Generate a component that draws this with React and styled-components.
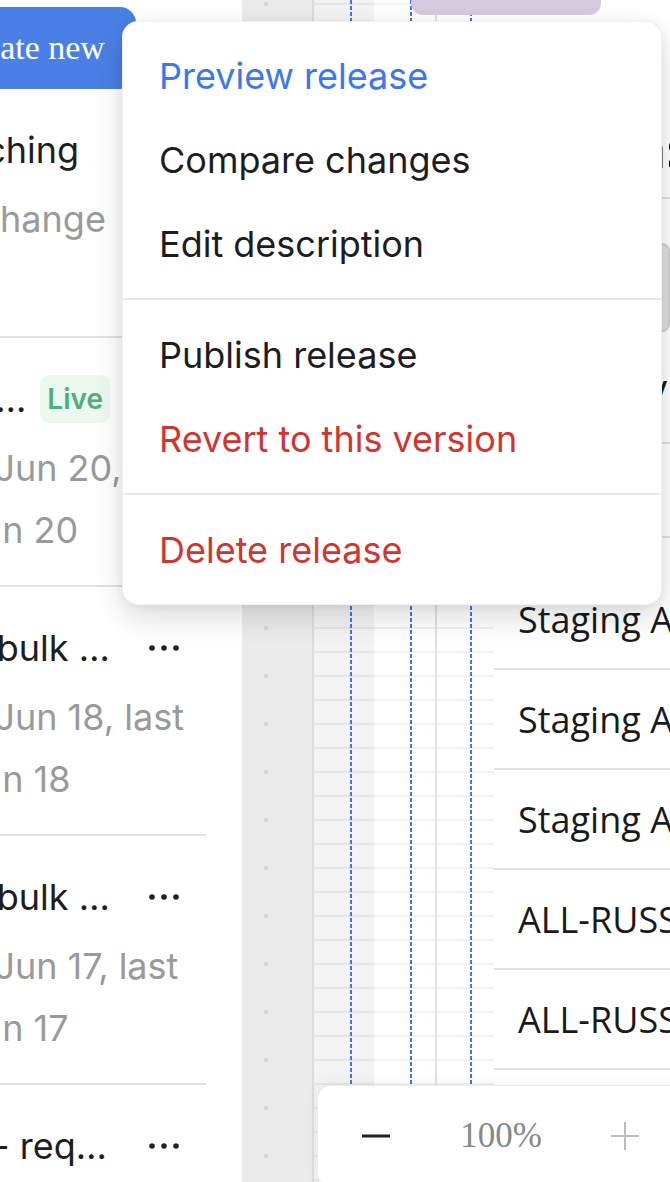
import React from "react";
import styled, { createGlobalStyle } from "styled-components";

const GlobalStyle = createGlobalStyle`
  html, body {
    margin: 0;
    padding: 0;
  }
  body {
    background: #fff;
    font-family: Inter, "Noto Sans", sans-serif;
    overflow: hidden;
  }
`;

const releases = [
  { title: "Tag matching", meta: "Staged change" },
  {
    title: "Regional staging import",
    meta: "Created Jun 20, last saved Jun 20",
    live: true,
  },
  { title: "Improve bulk editing", meta: "Created Jun 18, last saved Jun 18" },
  { title: "Improve bulk import", meta: "Created Jun 17, last saved Jun 17" },
  { title: "Release - requests", meta: "Created Jun 16, last saved Jun 16" },
];

const tableRows = [
  "Staging Area 1",
  "Staging Area 2",
  "Staging Area 3",
  "ALL-RUSSIA Expo",
  "ALL-RUSSIA Forum",
];

const menuTones = {
  accent: "#3e76ee",
  danger: "#d0352f",
  normal: "#1d1d1f",
};

function App() {
  return (
    <Screen>
      <GlobalStyle />
      <Sidebar>
        <CreateButton>Create new</CreateButton>
        {releases.map((r) => (
          <Release key={r.title}>
            <TitleLine>
              <Title>{r.title}</Title>
              {r.live && <Badge>Live</Badge>}
              <MoreButton aria-label="More">
                <svg width="36" height="12" viewBox="0 0 36 12">
                  <circle cx="6" cy="6" r="2.8" fill="#222" />
                  <circle cx="18" cy="6" r="2.8" fill="#222" />
                  <circle cx="30" cy="6" r="2.8" fill="#222" />
                </svg>
              </MoreButton>
            </TitleLine>
            <Meta>{r.meta}</Meta>
          </Release>
        ))}
      </Sidebar>

      <Canvas>
        <Frame>
          <SelectedBlock />
          <GridColumn $width={60} $bg="#f4f3f4" $line="#e6e5e6" $guide={36} />
          <GridColumn $width={61} $bg="#ffffff" $line="#f1f1f1" $guide={36} $divider />
          <GridColumn $width={57} $bg="#ffffff" $line="#f1f1f1" $guide={33} />
          <Table>
            <Intro>
              <Heading>Release schedule</Heading>
              <SearchBox>Search</SearchBox>
              <Caption>Country by region</Caption>
              <HeadRow>Title</HeadRow>
            </Intro>
            {tableRows.map((t) => (
              <DataRow key={t}>{t}</DataRow>
            ))}
          </Table>
        </Frame>
      </Canvas>

      <Menu>
        <MenuItem $tone="accent">Preview release</MenuItem>
        <MenuItem>Compare changes</MenuItem>
        <MenuItem>Edit description</MenuItem>
        <MenuDivider />
        <MenuItem>Publish release</MenuItem>
        <MenuItem $tone="danger">Revert to this version</MenuItem>
        <MenuDivider />
        <MenuItem $tone="danger">Delete release</MenuItem>
      </Menu>

      <ZoomBar>
        <ZoomCell $width={116}>
          <svg width="28" height="4" viewBox="0 0 28 4">
            <rect x="0" y="0.5" width="28" height="3" fill="#222" />
          </svg>
        </ZoomCell>
        <ZoomCell $width={134}>
          <ZoomValue>100%</ZoomValue>
        </ZoomCell>
        <ZoomCell $width={114}>
          <svg width="28" height="28" viewBox="0 0 28 28">
            <rect x="0" y="13" width="28" height="2" fill="#bdbdbd" />
            <rect x="13" y="0" width="2" height="28" fill="#bdbdbd" />
          </svg>
        </ZoomCell>
      </ZoomBar>
    </Screen>
  );
}

const Screen = styled.div`
  position: relative;
  display: flex;
  width: 670px;
  height: 1182px;
  overflow: hidden;
`;

const Sidebar = styled.aside`
  flex: none;
  width: 420px;
  margin-left: -178px;
  padding: 7px 36px 0 27px;
  box-sizing: border-box;
  background: #fff;
`;

const CreateButton = styled.button`
  display: block;
  width: 216px;
  height: 82px;
  margin-left: 71px;
  padding: 0;
  border: none;
  border-radius: 16px;
  background: #4a7fe6;
  color: #fff;
  font-family: "Liberation Serif", "Times New Roman", serif;
  font-size: 34px;
`;

const Release = styled.div`
  min-height: 249px;
  box-sizing: border-box;
  padding: 37px 0 24px;
  border-bottom: 2px solid #e2e2e2;
`;

const TitleLine = styled.div`
  display: flex;
  align-items: center;
  gap: 8px;
  height: 48px;
`;

const Title = styled.div`
  flex: 1;
  min-width: 0;
  white-space: nowrap;
  overflow: hidden;
  text-overflow: ellipsis;
  font-size: 36px;
  line-height: 48px;
  color: #1e1e1e;
`;

const Badge = styled.span`
  flex: none;
  height: 48px;
  margin: 0 4px;
  padding: 0 7px;
  border-radius: 9px;
  background: #edf8f1;
  color: #4cb07b;
  font-size: 28px;
  font-weight: 600;
  line-height: 48px;
`;

const MoreButton = styled.button`
  flex: none;
  display: flex;
  align-items: center;
  justify-content: center;
  width: 84px;
  height: 48px;
  padding: 0;
  border: none;
  background: none;
`;

const Meta = styled.div`
  margin-top: 14px;
  font-size: 36px;
  line-height: 62px;
  color: #9a9a9a;
`;

const Canvas = styled.main`
  flex: 1;
  display: flex;
  min-width: 0;
  padding-left: 70px;
  background-color: #ebebeb;
  background-image: radial-gradient(circle, #d7d7d7 2px, transparent 2.6px);
  background-size: 48px 48px;
  background-position: 0 -20px;
`;

const Frame = styled.section`
  position: relative;
  flex: 1;
  display: flex;
  min-width: 0;
  border-left: 2px solid #dddddd;
  background: #fff;
`;

const SelectedBlock = styled.div`
  position: absolute;
  left: 97px;
  top: -20px;
  width: 190px;
  height: 35px;
  border-radius: 12px;
  background: #d4cbdf;
`;

const GridColumn = styled.div`
  flex: none;
  width: ${(p) => p.$width}px;
  background-color: ${(p) => p.$bg};
  background-image: linear-gradient(to bottom, #3f74f2 0 4px, transparent 4px),
    linear-gradient(to bottom, ${(p) => p.$line} 0 2px, transparent 2px);
  background-size: 2px 6px, 100% 24px;
  background-repeat: repeat-y, repeat-y;
  background-position: ${(p) => p.$guide}px 0, 0 3px;
  border-right: ${(p) => (p.$divider ? "2px solid #e1e1e1" : "none")};
`;

const Table = styled.div`
  flex: 1;
  min-width: 0;
  overflow: hidden;
  font-family: "Open Sans", "Noto Sans", sans-serif;
  color: #1a1a1a;
`;

const Intro = styled.div`
  height: 570px;
  box-sizing: border-box;
  padding: 112px 0 0 24px;
  white-space: nowrap;
`;

const Heading = styled.h2`
  margin: 0;
  height: 85px;
  font-size: 54px;
  font-weight: 700;
  line-height: 70px;
  border-bottom: 2px solid #e1e1e1;
`;

const SearchBox = styled.div`
  margin-top: 44px;
  height: 89px;
  box-sizing: border-box;
  padding-left: 20px;
  border: 2px solid #cfcfcf;
  border-radius: 8px;
  background: #e2dfe2;
  color: #777;
  font-size: 30px;
  line-height: 85px;
`;

const Caption = styled.div`
  height: 109px;
  padding-top: 1px;
  font-size: 40px;
  line-height: 110px;
  border-bottom: 2px solid #e1e1e1;
`;

const HeadRow = styled.div`
  height: 92px;
  font-size: 36px;
  font-weight: 600;
  line-height: 92px;
  border-bottom: 2px solid #e1e1e1;
`;

const DataRow = styled.div`
  display: flex;
  align-items: center;
  height: 100px;
  box-sizing: border-box;
  padding-left: 24px;
  border-bottom: 2px solid #e1e1e1;
  font-size: 36px;
  white-space: nowrap;
`;

const Menu = styled.div`
  position: absolute;
  left: 122px;
  top: 21px;
  width: 540px;
  box-sizing: border-box;
  padding: 12px 0;
  border: 1px solid rgba(0, 0, 0, 0.05);
  border-radius: 16px;
  background: #fff;
  box-shadow: 0 12px 32px rgba(0, 0, 0, 0.14), 0 2px 8px rgba(0, 0, 0, 0.06);
`;

const MenuItem = styled.div`
  height: 84px;
  padding-left: 36px;
  font-size: 36px;
  line-height: 84px;
  color: ${(p) => menuTones[p.$tone || "normal"]};
`;

const MenuDivider = styled.div`
  height: 2px;
  margin: 12px 0 13px;
  background: #e9e9e9;
`;

const ZoomBar = styled.div`
  position: absolute;
  left: 317px;
  top: 1085px;
  display: flex;
  align-items: center;
  width: 420px;
  height: 100px;
  border: 1px solid #ececec;
  border-radius: 14px;
  background: #fff;
  box-shadow: 0 0 18px rgba(0, 0, 0, 0.06);
`;

const ZoomCell = styled.div`
  flex: none;
  display: flex;
  align-items: center;
  justify-content: center;
  width: ${(p) => p.$width}px;
`;

const ZoomValue = styled.span`
  font-family: "Liberation Serif", "Times New Roman", serif;
  font-size: 35px;
  color: #888;
`;

export default App;
